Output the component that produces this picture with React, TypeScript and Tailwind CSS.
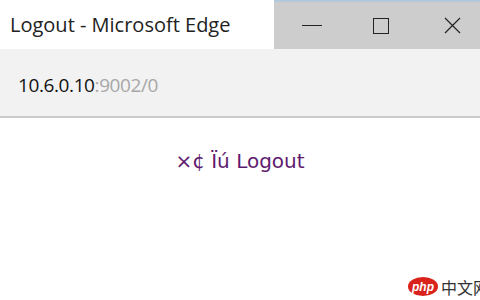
import React from 'react';

export default function App() {
  return (
    <div className="w-[480px] h-[300px] bg-white overflow-hidden relative" style={{ fontFamily: '"Open Sans", "Noto Sans", sans-serif' }}>
      {/* title bar */}
      <div className="flex h-[49px]">
        <div className="w-[274px] bg-white flex items-center pl-[10px] text-[20px] text-[#222]">Logout - Microsoft Edge</div>
        <div className="flex-1 bg-[#cdcdcd] border-t-2 border-[#b4c8dc] flex items-center text-[#222]">
          <div className="w-[69px] flex justify-center pl-[6px]">
            <div className="w-[20px] h-[1px] bg-[#222]" />
          </div>
          <div className="w-[70px] flex justify-center pl-[6px]">
            <div className="w-[16px] h-[16px] border border-[#222]" />
          </div>
          <div className="flex-1 flex justify-center pl-[12px]">
            <svg width="17" height="17" viewBox="0 0 17 17" fill="none" stroke="#222" strokeWidth="1.2">
              <path d="M1 1 L16 16 M16 1 L1 16" />
            </svg>
          </div>
        </div>
      </div>
      {/* address bar */}
      <div className="h-[69px] bg-[#f2f2f2] border-b-2 border-[#cacaca] flex items-center pl-[18px] pt-[6px] text-[19px] tracking-[-0.4px]">
        <span className="text-[#111]">10.6.0.10</span>
        <span className="text-[#a8a8a8]">:9002/0</span>
      </div>
      {/* page */}
      <div className="flex justify-center pt-[28px] text-[20px] text-[#5e1a6e]" style={{ fontFamily: '"DejaVu Sans", sans-serif' }}>
        ×¢ Ïú Logout
      </div>
      {/* watermark */}
      <div className="absolute left-[408px] top-[277px] flex items-center gap-[3px]">
        <div className="w-[30px] h-[19px] rounded-[50%] bg-[#d9221b] text-white text-[12px] font-bold italic leading-none flex items-center justify-center" style={{ fontFamily: '"Liberation Sans", sans-serif' }}>php</div>
        <div className="text-[16px] text-[#333] leading-none whitespace-nowrap" style={{ fontFamily: '"Noto Sans CJK SC", sans-serif' }}>中文网</div>
      </div>
    </div>
  );
}
